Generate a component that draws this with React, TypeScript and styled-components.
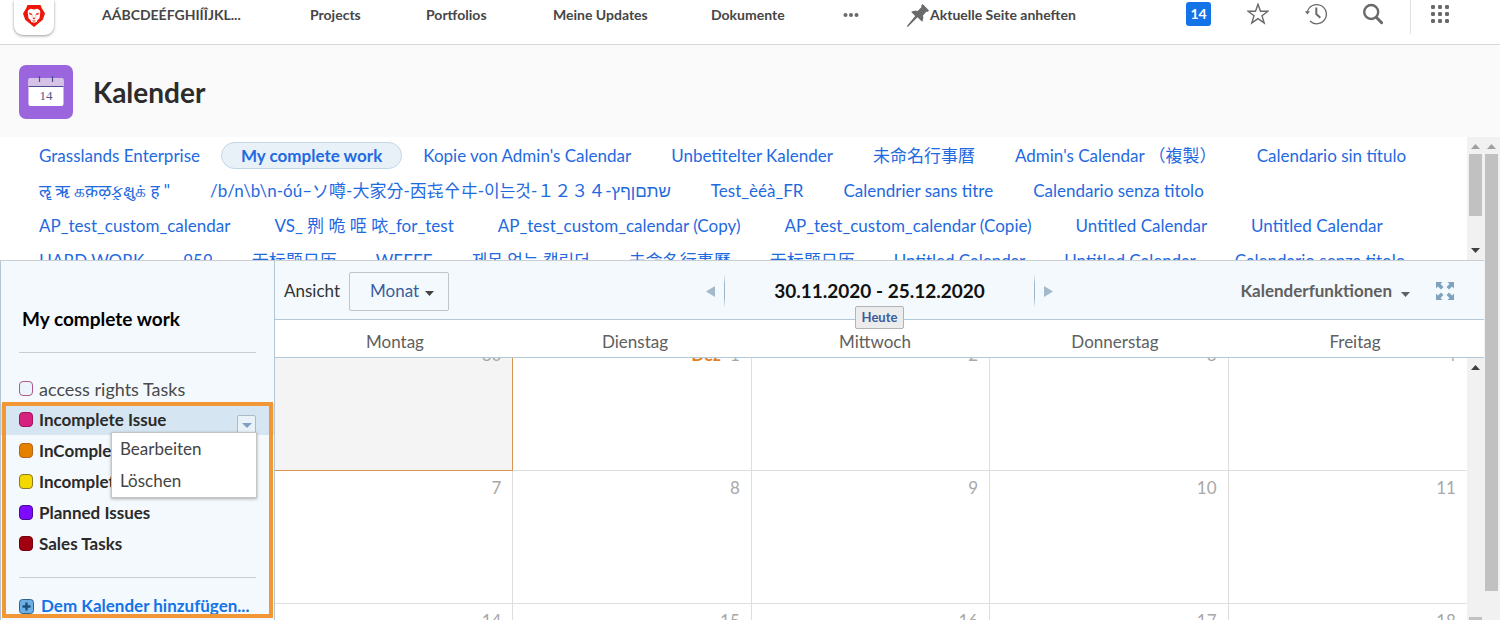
import React from "react";
import styled, { createGlobalStyle } from "styled-components";

const GlobalStyle = createGlobalStyle`
  *, *::before, *::after { box-sizing: border-box; }
  html, body, #root { height: 100%; }
  body {
    margin: 0;
    overflow: hidden;
    background: #fff;
    color: #333;
    font: 17px/24px Lato, "Noto Sans", "Noto Sans CJK TC", "Noto Sans CJK KR", sans-serif;
  }
  button, select, input { font: inherit; color: inherit; margin: 0; }
  button { padding: 0; border: 0; background: none; cursor: pointer; }
  h1, h2, ul { margin: 0; padding: 0; }
  ul { list-style: none; }
  a { color: #1f6ae0; text-decoration: none; }
  svg { display: block; }
`;

const Page = styled.div`
  display: flex;
  flex-direction: column;
  height: 100vh;
  overflow: hidden;
`;

/* ---------- top bar ---------- */

const TopBar = styled.header`
  display: flex;
  flex: none;
  align-items: flex-start;
  height: 45px;
  padding: 0 50px 0 14px;
  border-bottom: 1px solid #d8d8d8;
  font-size: 14px;
  line-height: 28px;
  font-weight: 700;
`;

const LogoTile = styled.a`
  flex: none;
  width: 40px;
  height: 35px;
  padding: 4px 8px;
  border-radius: 0 0 9px 9px;
  box-shadow: 0 1px 3px rgba(0, 0, 0, 0.4);
`;

const Nav = styled.nav`
  display: flex;
  align-items: center;
  gap: 66px;
  height: 30px;
  margin-left: 48px;
  white-space: nowrap;
`;

const NavLink = styled.a<{ $width: number }>`
  width: ${(p) => p.$width}px;
  color: #464646;
`;

const IconButton = styled.button`
  display: flex;
  align-items: center;
  height: 28px;
  color: #6a6a6a;
`;

const PinButton = styled(IconButton)`
  height: 30px;
  margin-left: 47px;
  white-space: nowrap;
  span { color: #464646; }
`;

const Tools = styled.div`
  display: flex;
  align-items: center;
  height: 34px;
  margin-left: auto;
`;

const ToolGroup = styled.div`
  display: flex;
  align-items: center;
  gap: 36px;
  height: 28px;
  margin-bottom: 6px;
`;

const Badge = styled.button`
  width: 25px;
  height: 24px;
  border-radius: 3px;
  background: #1473e6;
  color: #fff;
  font-weight: 700;
  font-size: 14px;
  line-height: 24px;
`;

const Divider = styled.span`
  width: 1px;
  height: 34px;
  margin: 0 19px 0 27px;
  background: #e1e1e1;
`;

/* ---------- page header ---------- */

const PageHeader = styled.div`
  display: flex;
  flex: none;
  align-items: center;
  gap: 20px;
  height: 92px;
  padding: 1px 19px 0;
  background: #fafafa;
`;

const Title = styled.h1`
  color: #2c2c2c;
  font-size: 28px;
  line-height: 36px;
  font-weight: 700;
`;

/* ---------- body ---------- */

const Body = styled.div`
  display: flex;
  flex: 1;
  min-height: 0;
`;

const Content = styled.main`
  display: flex;
  flex: 1;
  flex-direction: column;
  min-width: 0;
`;

const Track = styled.div<{ $page?: boolean; $atStart?: boolean }>`
  display: flex;
  flex: none;
  flex-direction: column;
  align-items: center;
  width: ${(p) => (p.$page ? 16 : 17)}px;
  padding: 7px ${(p) => (p.$page ? 2 : 0)}px ${(p) => (p.$atStart ? 0 : 7)}px 0;
  background: #f1f1f1;
`;

const Thumb = styled.span<{ $length: number; $end?: boolean }>`
  flex: none;
  width: 13px;
  height: ${(p) => p.$length}px;
  margin: ${(p) => (p.$end ? "auto 0 0" : "5px 0 auto")};
  background: #c1c1c1;
`;

const TabsArea = styled.div`
  display: flex;
  flex: none;
  height: 124px;
  border-bottom: 1px solid #cccfd2;
`;

const TabsList = styled.div`
  flex: 1;
  min-width: 0;
  padding: 1px 20px;
  overflow: hidden;
`;

const TabsRow = styled.div<{ $gap: number }>`
  display: flex;
  align-items: center;
  gap: ${(p) => p.$gap}px;
  height: 35px;
  white-space: nowrap;
`;

const Tab = styled.a<{ $active?: boolean }>`
  height: 27px;
  padding: 0 ${(p) => (p.$active ? 19 : 18)}px;
  border: 1px solid ${(p) => (p.$active ? "#c2d6e6" : "transparent")};
  border-radius: 14px;
  background: ${(p) => (p.$active ? "#e9f1f8" : "transparent")};
  font-weight: ${(p) => (p.$active ? 700 : 400)};
  line-height: 25px;
`;

const Workspace = styled.div`
  display: flex;
  flex: 1;
  min-height: 0;
`;

/* ---------- sidebar ---------- */

const Sidebar = styled.aside`
  flex: none;
  width: 275px;
  padding-top: 45px;
  overflow: hidden;
  border: solid #b4c6d4;
  border-width: 0 1px;
  background: #f4f9fd;
`;

const SidebarTitle = styled.h2`
  padding: 0 21px;
  color: #000;
  font-size: 19px;
  line-height: 26px;
  font-weight: 700;
`;

const Rule = styled.hr<{ $tight?: boolean }>`
  height: 1px;
  margin: ${(p) => (p.$tight ? "18px 18px 16px" : "20px 18px 20px")};
  border: 0;
  background: #c3ced6;
`;

const GroupRow = styled.li<{ $selected?: boolean }>`
  position: relative;
  display: flex;
  align-items: center;
  height: 31px;
  padding: 0 18px;
  background: ${(p) => (p.$selected ? "#d5e5f1" : "transparent")};
`;

const GroupLabel = styled.label<{ $bold?: boolean }>`
  display: flex;
  flex: 1;
  align-items: center;
  gap: 6px;
  color: ${(p) => (p.$bold ? "#2a2a2a" : "#4a4a4a")};
  font-size: ${(p) => (p.$bold ? 17 : 18)}px;
  font-weight: ${(p) => (p.$bold ? 700 : 400)};
`;

const Swatch = styled.input<{ $fill: string; $edge: string }>`
  appearance: none;
  width: 14px;
  height: 15px;
  border: 1px solid ${(p) => p.$edge};
  border-radius: 4px;
  background: ${(p) => p.$fill};
`;

const MenuToggle = styled.button`
  display: flex;
  align-self: flex-end;
  align-items: center;
  justify-content: center;
  width: 19px;
  height: 20px;
  border: 1px solid #a9bccd;
  border-radius: 2px;
  background: #e9f2f9;
  color: #7f9fc4;
`;

const Menu = styled.div`
  position: absolute;
  z-index: 1;
  top: 28px;
  right: 17px;
  width: 146px;
  border: 1px solid #c4c4c4;
  background: #fff;
  box-shadow: 0 1px 3px rgba(0, 0, 0, 0.3);
`;

const MenuItem = styled.button`
  display: block;
  width: 100%;
  height: 32px;
  padding: 0 8px;
  color: #444;
  text-align: left;
`;

const Framed = styled.div`
  position: relative;
  &::after {
    content: "";
    position: absolute;
    z-index: 2;
    top: -2px;
    left: 1px;
    right: 1px;
    height: 216px;
    border: 4px solid #f29735;
    pointer-events: none;
  }
`;

const AddLink = styled.a`
  display: flex;
  align-items: center;
  gap: 7px;
  padding: 0 18px;
  color: #1473e6;
  font-weight: 700;
  white-space: nowrap;
`;

/* ---------- calendar ---------- */

const Calendar = styled.section`
  display: flex;
  flex: 1;
  flex-direction: column;
  min-width: 0;
`;

const Toolbar = styled.div`
  display: grid;
  grid-template-columns: 1fr 347px 1fr;
  flex: none;
  align-items: center;
  height: 59px;
  padding-top: 2px;
  border-bottom: 1px solid #b3c8d8;
  background: #f4f9fd;
`;

const ViewField = styled.label`
  position: relative;
  display: flex;
  align-items: center;
  gap: 9px;
  padding-left: 9px;
  svg {
    position: absolute;
    left: 150px;
    top: 19px;
    color: #444;
    pointer-events: none;
  }
`;

const ViewSelect = styled.select`
  appearance: none;
  width: 100px;
  height: 39px;
  padding: 0 20px;
  border: 1px solid #c3c6c9;
  border-radius: 2px;
  background: transparent;
  color: #3b5c9f;
`;

const Period = styled.div`
  position: relative;
  display: flex;
  align-items: center;
  justify-content: space-between;
  color: #a3bacd;
  strong {
    color: #111;
    font-size: 19px;
  }
`;

const Stepper = styled.button`
  display: flex;
  align-items: center;
  gap: 9px;
`;

const Fade = styled.span`
  width: 1px;
  height: 34px;
  background: linear-gradient(transparent, #9db4c6 30%, #9db4c6 70%, transparent);
`;

const TodayButton = styled.button`
  position: absolute;
  z-index: 1;
  top: 32px;
  left: 149px;
  width: 49px;
  height: 23px;
  border: 1px solid #b3b3b3;
  border-radius: 2px;
  background: #ececec;
  color: #3b5c9f;
  font-size: 13px;
  line-height: 21px;
  font-weight: 700;
`;

const Actions = styled.div`
  display: flex;
  align-items: center;
  justify-content: flex-end;
  gap: 26px;
  padding-right: 30px;
`;

const ExpandButton = styled(IconButton)`
  color: #7fa3bd;
`;

const ActionsButton = styled.button`
  display: flex;
  align-items: center;
  gap: 9px;
  color: #606060;
  font-weight: 700;
  svg { margin-top: 6px; }
`;

const DayNames = styled.div`
  display: grid;
  grid-template-columns: repeat(5, 1fr);
  flex: none;
  align-items: center;
  height: 38px;
  padding: 7px 9px 0 0;
  border-bottom: 1px solid #b3c8d8;
  color: #606060;
  text-align: center;
`;

const GridArea = styled.div`
  display: flex;
  flex: 1;
  min-height: 0;
`;

const GridClip = styled.div`
  flex: 1;
  min-width: 0;
  overflow: hidden;
`;

const Grid = styled.div`
  display: grid;
  grid-template-columns: repeat(5, 1fr);
  grid-auto-rows: 133px;
  margin-top: -20px;
`;

const Day = styled.div<{ $today?: boolean }>`
  padding: 5px 11px;
  border: solid ${(p) => (p.$today ? "#d9954f" : "#dedede")};
  border-width: 0 1px 1px 0;
  background: ${(p) => (p.$today ? "#f4f4f4" : "#fff")};
  color: #a8a8a8;
  font-size: 17px;
  text-align: right;
  &:nth-child(5n) { border-right-width: 0; }
  b {
    margin-right: 9px;
    color: #e0801f;
  }
`;

/* ---------- icons ---------- */

const Caret = ({ up, size = 9 }: { up?: boolean; size?: number }) => (
  <svg width={size} height="5" viewBox="0 0 8 4" preserveAspectRatio="none" fill="currentColor">
    <path d={up ? "M0 4L4 0l4 4z" : "M0 0h8L4 4z"} />
  </svg>
);

const ScrollArrow = styled.span<{ $dim?: boolean }>`
  color: ${(p) => (p.$dim ? "#a0a0a0" : "#404040")};
`;

const LionLogo = () => (
  <svg width="24" height="24" viewBox="0 0 24 24">
    <path d="M5.500 1h13l1.300 3.200L23 9.600l-2.200 6.200L12 23l-8.800-7.200L1 9.600l3.200-5.400z" fill="#f0150a" />
    <path d="M6.200 6.200l2.600-1.400 3.200.7 3.200-.7 2.600 1.400.5 2-.8 6-2 1.800-.7 1.900L12 18.800l-2.800-.9-.7-1.900-2-1.800-.8-6z" fill="#fff" />
    <path d="M7 8.600l3.500 1.500-.8 1-2.200-.6zM17 8.600l-3.500 1.500.8 1 2.200-.6z" fill="#e8281e" />
    <path d="M10.300 14l1.700-.5 1.700.5-1.700 1.600zM9.600 17l2.400-.8 2.400.8-2.400.6z" fill="#e8281e" />
    <path d="M10.300 11l-.3 2.600M13.700 11l.3 2.600" stroke="#f0877f" strokeWidth=".6" />
  </svg>
);

const CalendarIcon = () => (
  <svg width="54" height="54" viewBox="0 0 54 54" aria-hidden="true">
    <rect width="54" height="54" rx="7" fill="#9b66dd" />
    <rect x="9.500" y="13" width="35" height="28" rx="2" fill="#fff" />
    <path d="M9.500 21v-6a2 2 0 0 1 2-2h31a2 2 0 0 1 2 2v6z" fill="#d5c2e4" />
    <path d="M9.500 21.500h35M20.500 11v6M33.500 11v6" stroke="#4c4c92" strokeWidth="1.200" />
    <text x="27" y="35" textAnchor="middle" fontFamily="Liberation Serif, serif" fontSize="13" fill="#55558c">14</text>
  </svg>
);

const PinIcon = () => (
  <svg width="24" height="24" viewBox="0 0 24 24" fill="currentColor">
    <path d="M16.600 1l6.400 6.400-1.200 1.500-1.200-.3-3.600 3.800c.6 2.200.2 4.600-.9 6.300l-4.600-4.500L2 23.800l-1.300-.6 8.500-10.200-4-4c1.500-1.300 4.200-1.700 6.400-1.100L15.600 4l-.5-1.300z" />
  </svg>
);

const StarIcon = () => (
  <svg width="22" height="22" viewBox="0 0 22 22" fill="none" stroke="currentColor" strokeWidth="1.400">
    <path d="M11 1.200l2.500 7h7.400l-5.900 4.500 2.200 7.200L11 15.600l-6.200 4.300L7 12.700 1.100 8.200h7.400z" />
  </svg>
);

const HistoryIcon = () => (
  <svg width="22" height="22" viewBox="0 0 22 22" fill="none" stroke="currentColor">
    <path d="M2.300 9.500A9.600 9.600 0 1 1 5 18" strokeWidth="1.300" />
    <path d="M0 8.300h5L2.300 11.600z" fill="currentColor" stroke="none" />
    <path d="M11.300 4.500V11l4 3.800" strokeWidth="2" />
  </svg>
);

const SearchIcon = () => (
  <svg width="20" height="22" viewBox="0 0 20 22" fill="none" stroke="currentColor">
    <circle cx="8.200" cy="9" r="7" strokeWidth="2.400" />
    <path d="M13.300 14.300l5.300 5.400" strokeWidth="3" strokeLinecap="round" />
  </svg>
);

const AppsIcon = () => (
  <svg width="20" height="20" viewBox="0 0 20 20" fill="currentColor">
    {[1, 8, 15].map((y) => [1, 8, 15].map((x) => <rect key={`${x}-${y}`} x={x} y={y} width="4" height="4" rx="1.200" />))}
  </svg>
);

const MoreIcon = () => (
  <svg width="16" height="6" viewBox="0 0 16 6" fill="currentColor">
    {[2.5, 8, 13.5].map((x) => <circle key={x} cx={x} cy="3" r="2" />)}
  </svg>
);

const ExpandIcon = () => (
  <svg width="18" height="18" viewBox="0 0 18 18" fill="currentColor">
    {[0, 90, 180, 270].map((turn) => (
      <path key={turn} d="M0 0h6.500L4.500 2l3 3L5 7.500l-3-3-2 2z" transform={`rotate(${turn} 9 9)`} />
    ))}
  </svg>
);

const SideArrow = ({ right }: { right?: boolean }) => (
  <svg width="9" height="11" viewBox="0 0 9 11" fill="currentColor">
    <path d={right ? "M0 0l9 5.500L0 11z" : "M9 0L0 5.500 9 11z"} />
  </svg>
);

const PlusIcon = () => (
  <svg width="15" height="15" viewBox="0 0 15 15">
    <rect x=".5" y=".5" width="14" height="14" rx="3" fill="#6db1e4" stroke="#2f628c" />
    <path d="M7.500 3.500v8M3.500 7.500h8" stroke="#1c4f7c" strokeWidth="2.400" />
  </svg>
);

/* ---------- data ---------- */

const navItems = [
  { label: "AÁBCDEÉFGHIÍÎJKL...", width: 142 },
  { label: "Projects", width: 50 },
  { label: "Portfolios", width: 61 },
  { label: "Meine Updates", width: 92 },
  { label: "Dokumente", width: 66 },
];

const tabRows = [
  { gap: 2, names: ["Grasslands Enterprise", "My complete work", "Kopie von Admin's Calendar", "Unbetitelter Kalender", "未命名行事曆", "Admin's Calendar （複製）", "Calendario sin título"] },
  { gap: 2, names: ["ॡ ऋ கक़ऴફ઼ક્ષુக் ह \"", "/b/n\\b\\n-óú–ソ噂-大家分-㐁㐂㐃㐄-이는것-１２３４-שתםןףץ", "Test_èéà_FR", "Calendrier sans titre", "Calendario senza titolo"] },
  { gap: 6, names: ["AP_test_custom_calendar", "VS_ 𠝹 𠱓 𠱸 𠲖_for_test", "AP_test_custom_calendar (Copy)", "AP_test_custom_calendar (Copie)", "Untitled Calendar", "Untitled Calendar"] },
  { gap: 1, names: ["HARD WORK", "959", "无标题日历", "WEEEE", "제목 없는 캘린더", "未命名行事曆", "无标题日历", "Untitled Calendar", "Untitled Calendar", "Calendario senza titolo"] },
];

const groups = [
  { label: "Incomplete Issue", fill: "#d6217f", edge: "#a3155e", selected: true },
  { label: "InComplete Tasks", fill: "#e48200", edge: "#b5651c" },
  { label: "Incomplete Work", fill: "#f4d900", edge: "#8f7a2a" },
  { label: "Planned Issues", fill: "#7f0bff", edge: "#4a0a94" },
  { label: "Sales Tasks", fill: "#a00010", edge: "#75000c" },
];

const dayNames = ["Montag", "Dienstag", "Mittwoch", "Donnerstag", "Freitag"];
const days = [30, 1, 2, 3, 4, 7, 8, 9, 10, 11, 14, 15, 16, 17, 18];

export default function App() {
  return (
    <Page>
      <GlobalStyle />
      <TopBar>
        <LogoTile href="#" aria-label="Home"><LionLogo /></LogoTile>
        <Nav>
          {navItems.map((item) => (
            <NavLink key={item.label} href="#" $width={item.width}>{item.label}</NavLink>
          ))}
          <IconButton aria-label="More"><MoreIcon /></IconButton>
        </Nav>
        <PinButton><PinIcon /><span>Aktuelle Seite anheften</span></PinButton>
        <Tools>
          <ToolGroup>
            <Badge>14</Badge>
            <IconButton aria-label="Favorites"><StarIcon /></IconButton>
            <IconButton aria-label="Recent"><HistoryIcon /></IconButton>
            <IconButton aria-label="Search"><SearchIcon /></IconButton>
          </ToolGroup>
          <Divider />
          <ToolGroup>
            <IconButton aria-label="Apps"><AppsIcon /></IconButton>
          </ToolGroup>
        </Tools>
      </TopBar>

      <PageHeader>
        <CalendarIcon />
        <Title>Kalender</Title>
      </PageHeader>

      <Body>
        <Content>
          <TabsArea>
            <TabsList>
              {tabRows.map((row, r) => (
                <TabsRow key={r} $gap={row.gap}>
                  {row.names.map((name, i) => (
                    <Tab key={i} href="#" $active={name === "My complete work"}>{name}</Tab>
                  ))}
                </TabsRow>
              ))}
            </TabsList>
            <Track aria-hidden="true">
              <ScrollArrow $dim><Caret up /></ScrollArrow>
              <Thumb $length={62} />
              <ScrollArrow><Caret /></ScrollArrow>
            </Track>
          </TabsArea>

          <Workspace>
            <Sidebar>
              <SidebarTitle>My complete work</SidebarTitle>
              <Rule />
              <ul>
                <GroupRow>
                  <GroupLabel>
                    <Swatch type="checkbox" $fill="#eaf4fa" $edge="#b0588c" />
                    access rights Tasks
                  </GroupLabel>
                </GroupRow>
              </ul>
              <Framed>
                <ul>
                  {groups.map((g) => (
                    <GroupRow key={g.label} $selected={g.selected}>
                      <GroupLabel $bold>
                        <Swatch type="checkbox" defaultChecked $fill={g.fill} $edge={g.edge} />
                        {g.label}
                      </GroupLabel>
                      {g.selected && (
                        <>
                          <MenuToggle aria-label="Options"><Caret size={10} /></MenuToggle>
                          <Menu>
                            <MenuItem>Bearbeiten</MenuItem>
                            <MenuItem>Löschen</MenuItem>
                          </Menu>
                        </>
                      )}
                    </GroupRow>
                  ))}
                </ul>
                <Rule $tight />
                <AddLink href="#"><PlusIcon />Dem Kalender hinzufügen...</AddLink>
              </Framed>
            </Sidebar>

            <Calendar>
              <Toolbar>
                <ViewField>
                  Ansicht
                  <ViewSelect defaultValue="Monat"><option>Monat</option></ViewSelect>
                  <Caret />
                </ViewField>
                <Period>
                  <Stepper aria-label="Previous"><SideArrow /><Fade /></Stepper>
                  <strong>30.11.2020 - 25.12.2020</strong>
                  <Stepper aria-label="Next"><Fade /><SideArrow right /></Stepper>
                  <TodayButton>Heute</TodayButton>
                </Period>
                <Actions>
                  <ActionsButton>Kalenderfunktionen <Caret /></ActionsButton>
                  <ExpandButton aria-label="Full screen"><ExpandIcon /></ExpandButton>
                </Actions>
              </Toolbar>
              <DayNames>
                {dayNames.map((d) => <span key={d}>{d}</span>)}
              </DayNames>
              <GridArea>
                <GridClip>
                  <Grid>
                    {days.map((d) => (
                      <Day key={d} $today={d === 30}>{d === 1 && <b>Dez</b>}{d}</Day>
                    ))}
                  </Grid>
                </GridClip>
                <Track $atStart aria-hidden="true">
                  <ScrollArrow><Caret up /></ScrollArrow>
                  <Thumb $length={3} $end />
                </Track>
              </GridArea>
            </Calendar>
          </Workspace>
        </Content>
        <Track $page aria-hidden="true">
          <ScrollArrow $dim><Caret up /></ScrollArrow>
          <Thumb $length={437} />
        </Track>
      </Body>
    </Page>
  );
}
